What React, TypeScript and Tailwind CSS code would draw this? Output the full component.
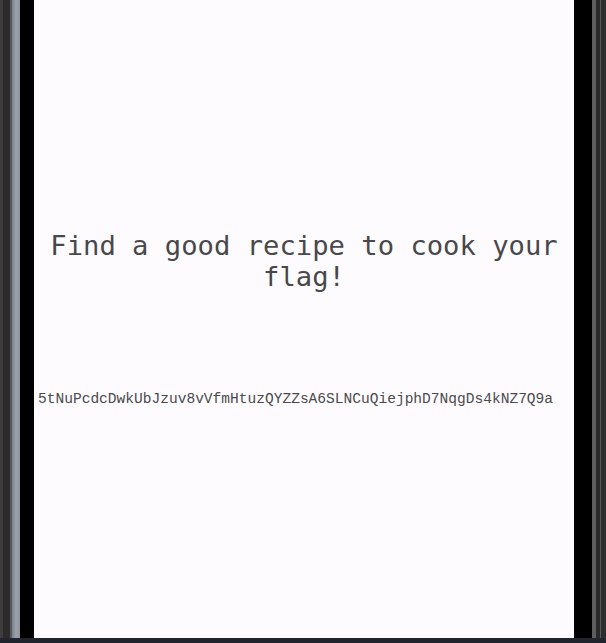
export default function App() {
  return (
    <div className="flex h-[643px] w-[606px] flex-col bg-black">
      <div className="flex h-[638px] w-full">
        <div className="flex h-full w-[34px] shrink-0">
          <div className="h-full w-[3px] bg-[#3d3d3d]" />
          <div className="h-full w-[7px] bg-[#2b2b2b]" />
          <div className="h-full w-[2px] bg-[#55585e]" />
          <div className="h-full w-[8px] bg-[linear-gradient(to_right,#7a7f88,#9ea3ab,#8e939b)]" />
          <div className="h-full w-[14px] bg-black" />
        </div>
        <div className="flex h-full min-w-0 flex-1 flex-col bg-[#fefbff] pt-[230px] text-[#48484c]">
          <h1 className="px-[10px] text-center font-['DejaVu_Sans_Mono',monospace] text-[27.2px] leading-[31px]">
            Find a good recipe to cook your flag!
          </h1>
          <p className="mt-[97px] whitespace-nowrap pl-[4px] font-['Liberation_Mono',monospace] text-[14.55px] leading-[20px] text-[#4a4a4e]">
            5tNuPcdcDwkUbJzuv8vVfmHtuzQYZZsA6SLNCuQiejphD7NqgDs4kNZ7Q9a
          </p>
        </div>
        <div className="flex h-full w-[32px] shrink-0">
          <div className="h-full w-[18px] bg-black" />
          <div className="h-full w-[4px] bg-[#5e5e5e]" />
          <div className="h-full w-[4px] bg-[#2a2a2a]" />
          <div className="h-full w-[1px] bg-[#5a5a5a]" />
          <div className="h-full w-[5px] bg-[#2e2e2e]" />
        </div>
      </div>
      <div className="h-[5px] w-full bg-[#21242c]" />
    </div>
  );
}
